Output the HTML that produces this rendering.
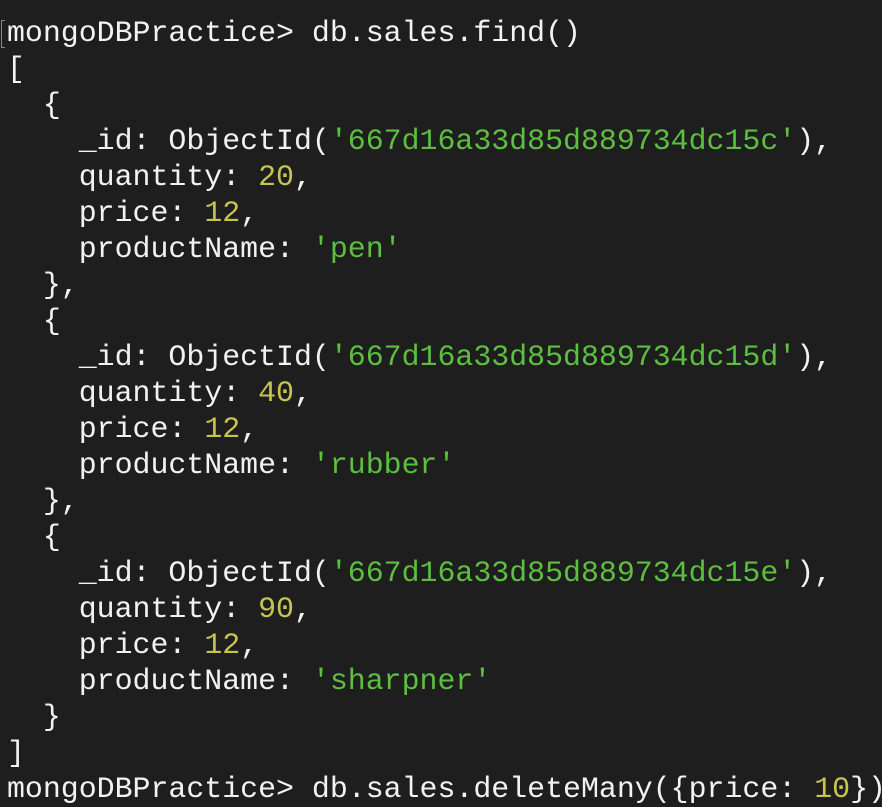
<!DOCTYPE html>
<html><head><style>
html,body{margin:0;padding:0;background:#1e1e1e;width:882px;height:782px;overflow:hidden}
pre{margin:0;position:absolute;left:7px;top:15px;font-family:"Liberation Mono",monospace;font-size:29.9px;line-height:36px;color:#f2f2f2;letter-spacing:0}
.g{color:#5cbf3f}.y{color:#c8c450}
.cur{position:absolute;left:1px;top:20px;width:3px;height:26px;border:1px solid #888;border-right:none}
</style></head><body>
<div class="cur"></div>
<pre>mongoDBPractice&gt; db.sales.find()
[
  {
    _id: ObjectId(<span class="g">'667d16a33d85d889734dc15c'</span>),
    quantity: <span class="y">20</span>,
    price: <span class="y">12</span>,
    productName: <span class="g">'pen'</span>
  },
  {
    _id: ObjectId(<span class="g">'667d16a33d85d889734dc15d'</span>),
    quantity: <span class="y">40</span>,
    price: <span class="y">12</span>,
    productName: <span class="g">'rubber'</span>
  },
  {
    _id: ObjectId(<span class="g">'667d16a33d85d889734dc15e'</span>),
    quantity: <span class="y">90</span>,
    price: <span class="y">12</span>,
    productName: <span class="g">'sharpner'</span>
  }
]
mongoDBPractice&gt; db.sales.deleteMany({price: <span class="y">10</span>})</pre>
</body></html>
